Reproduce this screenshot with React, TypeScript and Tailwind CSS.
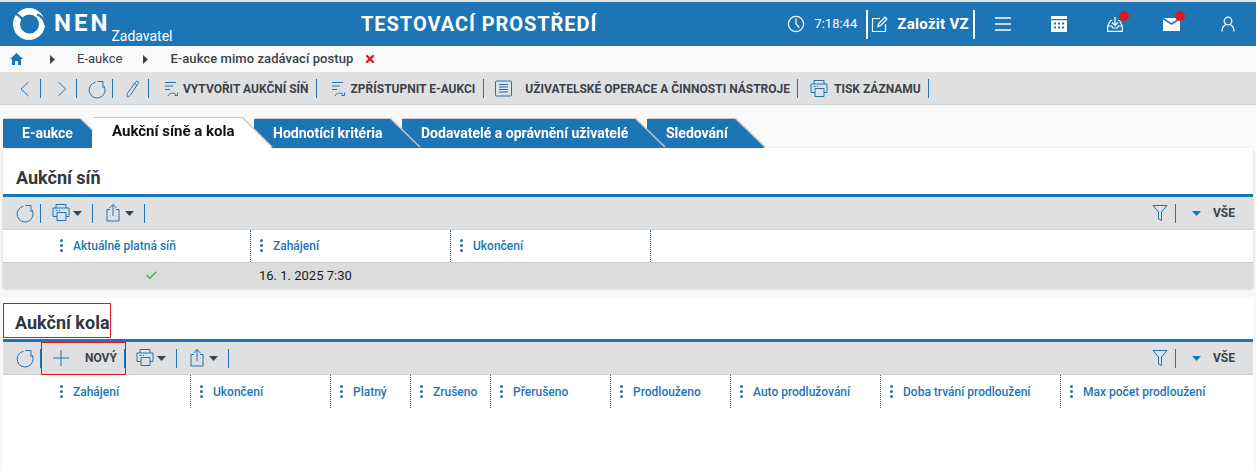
import React from "react";
import { Check, X } from "lucide-react";

const B = "#1e75b5";

const Sep = ({ ml }: { ml: string }) => <span className={`block w-px h-[19px] bg-[#1e75b5] shrink-0 ${ml}`} />;

const Ic = ({ children, w = 20, cls = "" }: { children: React.ReactNode; w?: number; cls?: string }) => (
  <svg width={w} height={20} viewBox={`0 0 ${w} 20`} fill="none" stroke={B} strokeWidth={1} className={`shrink-0 ${cls}`}>
    {children}
  </svg>
);

const Reload = ({ cls = "" }: { cls?: string }) => (
  <Ic cls={cls}>
    <path d="M8.500 3.200A8 8 0 1 0 17 7" />
    <path d="M10.500 2.500h5.500V9" />
  </Ic>
);
const Printer = ({ cls = "" }: { cls?: string }) => (
  <Ic w={18} cls={cls}>
    <path d="M4 5V1.500h10V5M5 13.500H1V5h16v8.500h-3M5 9.500h9v8H5zM3.500 7.500h2M7 7.500h1" />
  </Ic>
);
const Share = ({ cls = "" }: { cls?: string }) => (
  <Ic w={14} cls={cls}>
    <path d="M4 6.500H1v11.500h12V6.500h-3M7 13V1.500M3.500 5 7 1.500 10.500 5" />
  </Ic>
);
const Flow = ({ cls = "" }: { cls?: string }) => (
  <Ic w={14} cls={cls}>
    <path d="M1 3.500h11M1 7h8M1 10.500h5M4 17c1-3 6-4 8-1.500M13.500 13.500v3h-3" />
  </Ic>
);
const Caret = ({ c = "#3d4248", cls = "" }: { c?: string; cls?: string }) => (
  <svg width="9" height="5" viewBox="0 0 9 5" className={`shrink-0 ${cls}`}>
    <path d="M0 0h9L4.500 5z" fill={c} />
  </svg>
);
const Tri = ({ cls = "" }: { cls?: string }) => (
  <svg width="5" height="9" viewBox="0 0 5 9" className={`shrink-0 ${cls}`}>
    <path d="M0 0l5 4.500L0 9z" fill="#3d4248" />
  </svg>
);

const TABS = [
  { t: "E-aukce", cls: "w-[107px] z-40", inner: "h-[29px] bg-[#1e75b5] text-white text-[14px]" },
  { t: "Aukční síně a kola", cls: "w-[180px] z-50 -ml-[18px]", inner: "h-[30px] pl-[20px] pb-[4px] bg-white text-[#111] text-[15px]" },
  { t: "Hodnotící kritéria", cls: "w-[166px] z-30 -ml-[18px]", inner: "h-[29px] bg-[#1e75b5] text-white text-[14px]" },
  { t: "Dodavatelé a oprávnění uživatelé", cls: "w-[263px] z-20 -ml-[18px]", inner: "h-[29px] bg-[#1e75b5] text-white text-[14px]" },
  { t: "Sledování", cls: "w-[118px] z-10 -ml-[18px]", inner: "h-[29px] bg-[#1e75b5] text-white text-[14px]" },
];

const RightTools = () => (
  <div className="ml-auto flex items-center">
    <Ic w={16}>
      <path d="M1 2.500h14L9.500 9v8.500l-3-1.500V9z" />
    </Ic>
    <Sep ml="ml-[7px]" />
    <Caret c={B} cls="ml-[16px]" />
    <span className="ml-[12px] mr-[18px] text-[12px] font-bold text-[#3b4148]">VŠE</span>
  </div>
);

const Cell = ({ w, label, pl, last }: { w: string; label: string; pl: string; last?: boolean }) => (
  <div className={`${w} ${pl} shrink-0 h-full flex items-center ${last ? "" : "border-r border-dotted border-[#1e75b5]"} text-[12px] font-medium text-[#1e75b5]`}>
    <span className="flex flex-col gap-[2px] mr-[10px] mb-[1px]">
      <i className="block w-[3px] h-[3px] rounded-full bg-[#1e75b5]" />
      <i className="block w-[3px] h-[3px] rounded-full bg-[#1e75b5]" />
      <i className="block w-[3px] h-[3px] rounded-full bg-[#1e75b5]" />
    </span>
    <span className="whitespace-nowrap">{label}</span>
  </div>
);

export default function App() {
  return (
    <div className="w-[1256px] h-[470px] overflow-hidden bg-[#f9f9f9] font-['Roboto',sans-serif]">
      <div className="h-[2px] bg-[#e4e4e4]" />
      {/* header */}
      <header className="h-[44px] bg-[#1e75b5] flex items-center text-white relative">
        <svg width="34" height="34" viewBox="0 0 34 34" className="ml-[12px] shrink-0">
          <circle cx="17" cy="17" r="16" fill="#fff" />
          <circle cx="17.500" cy="17" r="9.500" fill={B} />
          <path d="M1.500 6C5 7 8 9 10.500 12.500" fill="none" stroke={B} strokeWidth="2.200" />
          <path d="M33.500 18C32 12 29 8.500 25 7.500" fill="none" stroke={B} strokeWidth="2.200" />
        </svg>
        <span className="ml-[8px] text-[24px] leading-none font-bold tracking-[3px] mb-[2px]">NEN</span>
        <span className="ml-[1px] text-[14px] leading-none self-end mb-[3px] font-normal">Zadavatel</span>
        <div className="absolute left-[361px] top-[10px] text-[20px] leading-[24px] font-bold tracking-[0.95px]">TESTOVACÍ PROSTŘEDÍ</div>
        <div className="ml-auto flex items-center">
          <svg width="18" height="18" viewBox="0 0 18 18" fill="none" stroke="#fff" strokeWidth="1.200" className="shrink-0">
            <circle cx="9" cy="9" r="7.600" />
            <path d="M9 3.500V9l3.300 3.500" />
          </svg>
          <span className="ml-[9px] text-[13px] font-normal whitespace-nowrap">7:18:44</span>
          <span className="block ml-[9px] w-[2px] h-[29px] bg-white" />
          <svg width="18" height="18" viewBox="0 0 18 18" fill="none" stroke="#fff" strokeWidth="1.200" className="ml-[3px] shrink-0">
            <path d="M14.500 9v7.500h-13V3.500H9M7 11.500l.7-3L14 2l2 2-6.300 6.500z" />
          </svg>
          <span className="ml-[8px] text-[15px] font-bold tracking-[.3px] whitespace-nowrap">Založit VZ</span>
          <span className="block ml-[4px] w-[2px] h-[29px] bg-white" />
          <svg width="18" height="16" viewBox="0 0 18 16" fill="none" stroke="#fff" strokeWidth="1.500" className="ml-[19px] shrink-0">
            <path d="M1 2h16M1 8h16M1 14h16" />
          </svg>
          <svg width="16" height="16" viewBox="0 0 16 16" fill="#fff" className="ml-[39px] shrink-0">
            <path fillRule="evenodd" d="M0 0h16v16H0zM0 3v1.300h16V3zM3 6.500v2h2v-2zm4 0v2h2v-2zm4 0v2h2v-2zM3 10.500v2h2v-2zm4 0v2h2v-2zm4 0v2h2v-2z" />
          </svg>
          <span className="relative ml-[40px] block w-[16px] h-[16px]">
            <svg width="16" height="16" viewBox="0 0 16 16" fill="none" stroke="#fff" strokeWidth="1.200">
              <path d="M5 4.500H3.500L.7 10v5.300h14.600V10L12.500 4.500H11M.7 10h4l1 2h4.600l1-2h4M8 1v8.500M5 6.500l3 3 3-3" />
            </svg>
            <span className="absolute left-[12px] top-[-5px] w-[10px] h-[10px] rounded-full bg-[#db1a1f]" />
          </span>
          <span className="relative ml-[40px] block w-[17px] h-[13px]">
            <svg width="17" height="13" viewBox="0 0 17 13" fill="#fff">
              <path d="M0 1.500 8.500 7 17 1.500V13H0zM.5 0h16L8.500 5z" />
            </svg>
            <span className="absolute left-[12px] top-[-7px] w-[10px] h-[10px] rounded-full bg-[#db1a1f]" />
          </span>
          <svg width="14" height="16" viewBox="0 0 14 16" fill="none" stroke="#fff" strokeWidth="1.200" className="ml-[41px] mr-[21px] shrink-0">
            <circle cx="7" cy="5" r="3.800" />
            <path d="M1 15.500c0-3.500 2-6 3.800-7M13 15.500c0-3.500-2-6-3.800-7" />
          </svg>
        </div>
      </header>
      {/* breadcrumb */}
      <nav className="h-[26px] flex items-center text-[13px] text-[#3d4248]">
        <svg width="13" height="12" viewBox="0 0 13 12" className="ml-[10px] shrink-0">
          <path d="M6.500 0 13 6h-2v6H8V8H5v4H2V6H0z" fill={B} />
        </svg>
        <Tri cls="ml-[27px]" />
        <span className="ml-[22px]">E-aukce</span>
        <Tri cls="ml-[21px]" />
        <span className="ml-[22px] font-medium tracking-[0.07px]">E-aukce mimo zadávací postup</span>
        <X size={12} strokeWidth={4.500} color="#ee1111" className="ml-[11px] shrink-0" />
      </nav>
      {/* toolbar */}
      <div className="h-[33px] pt-[1px] bg-[#dfe0e2] border-b border-[#d0d2d4] flex items-center text-[12px] font-bold text-[#3d4248] pl-[20px] whitespace-nowrap">
        <svg width="9" height="16" viewBox="0 0 9 16" fill="none" stroke={B} className="shrink-0">
          <path d="M8.500 1 1 8l7.500 7" />
        </svg>
        <Sep ml="ml-[11px]" />
        <svg width="8" height="16" viewBox="0 0 8 16" fill="none" stroke={B} className="ml-[17px] shrink-0">
          <path d="M.5 1 7.500 8l-7 7" />
        </svg>
        <Sep ml="ml-[10px]" />
        <Reload cls="ml-[10px]" />
        <Sep ml="ml-[5px]" />
        <Ic w={16} cls="ml-[11px]">
          <path d="M4 13.500 12 2.500c1-1 3 .3 2.300 1.700L6.500 16c-1 1.500-3 1.500-3.200 1.500-.3-1 0-2.800.7-4zM10.500 4.500l2.500 2" />
        </Ic>
        <Sep ml="ml-[8px]" />
        <Flow cls="ml-[15px]" />
        <span className="ml-[5px]">VYTVOŘIT AUKČNÍ SÍŇ</span>
        <Sep ml="ml-[7px]" />
        <Flow cls="ml-[14px]" />
        <span className="ml-[6px]">ZPŘÍSTUPNIT E-AUKCI</span>
        <Sep ml="ml-[8px]" />
        <Ic w={17} cls="ml-[11px]">
          <rect x=".5" y="2" width="16" height="15" rx="1" />
          <path d="M4 5.500h9M4 8h9M4 10.500h9M4 13h9" />
        </Ic>
        <span className="ml-[13px]">UŽIVATELSKÉ OPERACE A ČINNOSTI NÁSTROJE</span>
        <Sep ml="ml-[7px]" />
        <Printer cls="ml-[12px]" />
        <span className="ml-[6px]">TISK ZÁZNAMU</span>
        <Sep ml="ml-[7px]" />
      </div>
      {/* tabs */}
      <div className="h-[43px] pl-[3px] flex items-end">
        {TABS.map((x) => (
          <div key={x.t} className={`relative drop-shadow-[1px_-1px_0_#c6c8ca] ${x.cls}`}>
            <div className={`flex items-center pl-[19px] font-bold whitespace-nowrap [clip-path:polygon(0_0,calc(100%-30px)_0,100%_100%,0_100%)] ${x.inner}`}>
              {x.t}
            </div>
          </div>
        ))}
      </div>
      {/* panel 1 */}
      <section className="mx-[3px] w-[1250px] bg-white shadow-[0_1px_3px_rgba(0,0,0,.18)]">
        <div className="h-[46px] pt-[20px] pb-[8px] flex items-center pl-[13px] text-[18px] font-bold text-[#33373d]">Aukční síň</div>
        <div className="h-[3px] bg-[#1e75b5]" />
        <div className="h-[33px] bg-[#dfe0e2] border-b border-[#d0d2d4] flex items-center">
          <Reload cls="ml-[12px]" />
          <Sep ml="ml-[5px]" />
          <Printer cls="ml-[11px]" />
          <Caret cls="ml-[3px]" />
          <Sep ml="ml-[10px]" />
          <Share cls="ml-[13px]" />
          <Caret cls="ml-[5px]" />
          <Sep ml="ml-[10px]" />
          <RightTools />
        </div>
        <div className="h-[33px] flex items-center border-b border-[#c9cbcd]">
          <Cell w="w-[248px]" pl="pl-[57px]" label="Aktuálně platná síň" />
          <Cell w="w-[200px]" pl="pl-[9px]" label="Zahájení" />
          <Cell w="w-[200px]" pl="pl-[9px]" label="Ukončení" />
        </div>
        <div className="h-[25px] bg-[#dcdcdc] flex items-center text-[13px] text-[#1a1a1a]">
          <div className="w-[248px] pl-[142px]">
            <Check size={13} strokeWidth={3} color="#4caf50" />
          </div>
          <div className="pl-[8px]">16. 1. 2025 7:30</div>
        </div>
      </section>
      {/* panel 2 */}
      <section className="mt-[10px] mx-[3px] w-[1250px] h-[172px] bg-white">
        <div className="relative h-[41px] pt-[7px] flex items-center pl-[12px] text-[18px] font-bold text-[#33373d]">
          Aukční kola
          <span className="absolute left-0 top-[5px] w-[108px] h-[35px] border border-[#e0141c]" />
        </div>
        <div className="h-[3px] bg-[#1e75b5]" />
        <div className="relative h-[33px] bg-[#dfe0e2] border-b border-[#d0d2d4] flex items-center">
          <Reload cls="ml-[12px]" />
          <Sep ml="ml-[5px]" />
          <svg width="16" height="16" viewBox="0 0 16 16" fill="none" stroke={B} className="ml-[12px] shrink-0">
            <path d="M8 0v16M0 8h16" />
          </svg>
          <span className="ml-[16px] text-[12px] font-bold text-[#3d4248]">NOVÝ</span>
          <Sep ml="ml-[7px]" />
          <Printer cls="ml-[11px]" />
          <Caret cls="ml-[3px]" />
          <Sep ml="ml-[10px]" />
          <Share cls="ml-[13px]" />
          <Caret cls="ml-[5px]" />
          <Sep ml="ml-[10px]" />
          <RightTools />
          <span className="absolute left-[38px] top-0 w-[85px] h-[33px] border border-[#e0141c]" />
        </div>
        <div className="h-[33px] flex items-center">
          <Cell w="w-[188px]" pl="pl-[57px]" label="Zahájení" />
          <Cell w="w-[140px]" pl="pl-[9px]" label="Ukončení" />
          <Cell w="w-[80px]" pl="pl-[9px]" label="Platný" />
          <Cell w="w-[80px]" pl="pl-[9px]" label="Zrušeno" />
          <Cell w="w-[120px]" pl="pl-[9px]" label="Přerušeno" />
          <Cell w="w-[120px]" pl="pl-[9px]" label="Prodlouženo" />
          <Cell w="w-[150px]" pl="pl-[9px]" label="Auto prodlužování" />
          <Cell w="w-[180px]" pl="pl-[9px]" label="Doba trvání prodloužení" />
          <Cell w="w-[180px]" pl="pl-[9px]" label="Max počet prodloužení" last />
        </div>
      </section>
    </div>
  );
}
